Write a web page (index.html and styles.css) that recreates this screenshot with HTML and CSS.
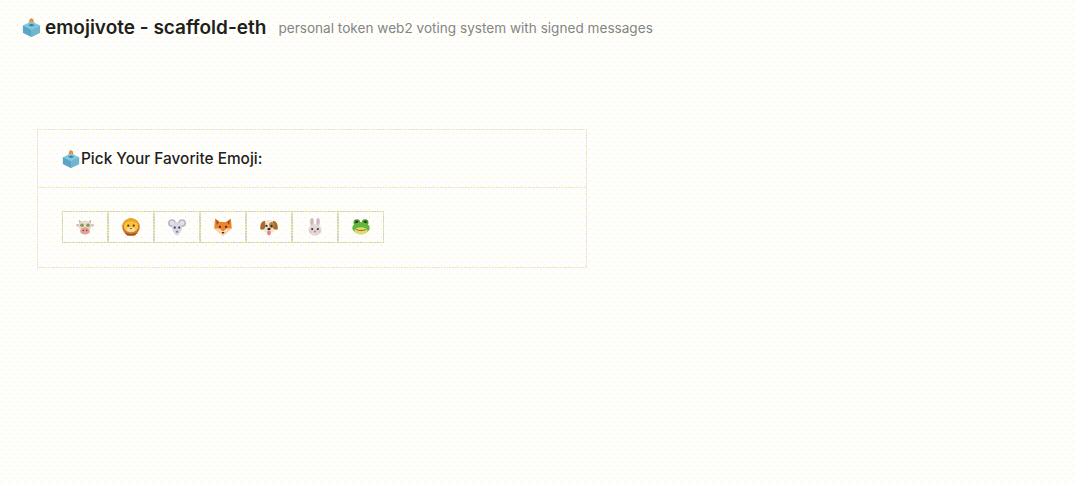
FILE: index.html
```html
<!DOCTYPE html>
<html lang="en">
<head>
    <meta charset="UTF-8">
    <meta name="viewport" content="width=device-width, initial-scale=1.0">
    <title>emojivote - scaffold-eth</title>
    <link rel="stylesheet" href="styles.css">
</head>
<body>

    <!-- Shared emoji drawings -->
    <svg class="defs" width="0" height="0">
        <symbol id="ballot" viewBox="0 0 20 20">
            <path d="M8 1.500L10 0l2 1.500L13 6l-2 2H9L7 6z" fill="#f08a3c"/>
            <path d="M10 3.500l9 4.500v7.500L10 20l-9-4.500V8z" fill="#82c8dc"/>
            <path d="M1 8l9 4.500V20l-9-4.500z" fill="#5aa5c6"/>
            <path d="M10 12.500L19 8v7.500L10 20z" fill="#70b6ce"/>
            <path d="M6.500 7.500L10 6l3.500 1.500L10 9z" fill="#3f7f9c"/>
        </symbol>
    </svg>

    <header class="page-header">
        <svg class="ballot-icon"><use href="#ballot"/></svg>
        <h1>emojivote - scaffold-eth</h1>
        <span class="subtitle">personal token web2 voting system with signed messages</span>
    </header>

    <div class="card">
        <div class="card-head">
            <svg class="ballot-icon small"><use href="#ballot"/></svg>
            <span>Pick Your Favorite Emoji:</span>
        </div>
        <div class="card-body">
            <!-- cow -->
            <button aria-label="cow">
                <svg class="emoji" viewBox="0 0 16 16">
                    <path d="M2.500 1.500l3 2.500-2 2zM13.500 1.500l-3 2.500 2 2z" fill="#b5a284"/>
                    <ellipse cx="1.800" cy="6.500" rx="1.800" ry="1.200" fill="#dcb8a4"/>
                    <ellipse cx="14.200" cy="6.500" rx="1.800" ry="1.200" fill="#dcb8a4"/>
                    <ellipse cx="8" cy="7" rx="5.800" ry="4.800" fill="#e8dccd"/>
                    <circle cx="5.300" cy="6.500" r="1.600" fill="#8b9656"/>
                    <circle cx="10.700" cy="6.500" r="1.600" fill="#8b9656"/>
                    <ellipse cx="8" cy="11.500" rx="4.300" ry="3.200" fill="#e2a09c"/>
                    <circle cx="6.500" cy="11" r=".7" fill="#7d4e4e"/>
                    <circle cx="9.500" cy="11" r=".7" fill="#7d4e4e"/>
                </svg>
            </button>
            <!-- lion -->
            <button aria-label="lion">
                <svg class="emoji" viewBox="0 0 16 16">
                    <circle cx="8" cy="8" r="7.800" fill="#cf7426"/>
                    <path d="M.8 6.500C1.500 2 5 .2 8 .2s6.500 1.800 7.200 6.300z" fill="#eca524"/>
                    <ellipse cx="8" cy="7.800" rx="6.400" ry="5" fill="#fbc43a"/>
                    <circle cx="5.600" cy="6.800" r="1" fill="#5b3a1a"/>
                    <circle cx="10.400" cy="6.800" r="1" fill="#5b3a1a"/>
                    <ellipse cx="8" cy="10.300" rx="3.800" ry="2" fill="#f5dfb0"/>
                    <path d="M6.800 8.800h2.400L8 10.200z" fill="#8a4a2a"/>
                    <path d="M2.500 13q5.500 2.500 11 0l-2 2.600h-7z" fill="#97501f"/>
                </svg>
            </button>
            <!-- mouse -->
            <button aria-label="mouse">
                <svg class="emoji" viewBox="0 0 16 16">
                    <circle cx="3.500" cy="4.500" r="3.500" fill="#b9b7c6"/>
                    <circle cx="12.500" cy="4.500" r="3.500" fill="#b9b7c6"/>
                    <circle cx="3.500" cy="4.500" r="2" fill="#ebdfe4"/>
                    <circle cx="12.500" cy="4.500" r="2" fill="#ebdfe4"/>
                    <path d="M8 3.500c3 0 4.500 2.500 4.500 5S10 15.500 8 15.500s-4.500-4.500-4.500-7S5 3.500 8 3.500z" fill="#d9d8e2"/>
                    <circle cx="6" cy="8.500" r="1" fill="#3d3b4a"/>
                    <circle cx="10" cy="8.500" r="1" fill="#3d3b4a"/>
                    <ellipse cx="8" cy="12.300" rx="1.100" ry=".9" fill="#7f7c8c"/>
                </svg>
            </button>
            <!-- fox -->
            <button aria-label="fox">
                <svg class="emoji" viewBox="0 0 16 16">
                    <path d="M1 .5l4.500 3h5L15 .5l.8 8.500L8 15.800.2 9z" fill="#ec8430"/>
                    <path d="M.8 9L8 15.800 15.200 9l-4.200.5L8 12 5 9.500z" fill="#fadcb4"/>
                    <path d="M2 1.500l2.200 2.300-1.700 2.500zM14 1.500l-2.200 2.300 1.700 2.500z" fill="#8a4a22"/>
                    <circle cx="5.300" cy="7.800" r="1" fill="#44260f"/>
                    <circle cx="10.700" cy="7.800" r="1" fill="#44260f"/>
                    <path d="M6.600 12.400h2.800L8 14.200z" fill="#44260f"/>
                </svg>
            </button>
            <!-- dog -->
            <button aria-label="dog">
                <svg class="emoji" viewBox="0 0 16 16">
                    <circle cx="8" cy="7.500" r="6" fill="#efe6d8"/>
                    <path d="M4.500 2.500C1.500 2.500-.2 6 .3 10c2.200 1 4 0 4.500-2.500z" fill="#a9682e"/>
                    <path d="M11.500 2.500c3 0 4.700 3.500 4.200 7.500-2.200 1-4 0-4.500-2.500z" fill="#a9682e"/>
                    <ellipse cx="10.500" cy="6.300" rx="2.400" ry="2.700" fill="#c08540"/>
                    <circle cx="5.800" cy="7" r="1" fill="#3a2a1e"/>
                    <circle cx="10.300" cy="7" r="1" fill="#3a2a1e"/>
                    <ellipse cx="8" cy="9.700" rx="1.500" ry="1.100" fill="#3a2a1e"/>
                    <ellipse cx="8" cy="13.300" rx="1.700" ry="2.200" fill="#ec7f8a"/>
                </svg>
            </button>
            <!-- rabbit -->
            <button aria-label="rabbit">
                <svg class="emoji" viewBox="0 0 16 16">
                    <ellipse cx="5.300" cy="3.500" rx="1.600" ry="3.500" fill="#c8bfc0"/>
                    <ellipse cx="10.700" cy="3.500" rx="1.600" ry="3.500" fill="#c8bfc0"/>
                    <ellipse cx="5.300" cy="3.800" rx=".7" ry="2.500" fill="#e5aeb6"/>
                    <ellipse cx="10.700" cy="3.800" rx=".7" ry="2.500" fill="#e5aeb6"/>
                    <ellipse cx="8" cy="10.500" rx="5.800" ry="5.200" fill="#e2d9d4"/>
                    <circle cx="5.500" cy="9.800" r="1" fill="#423840"/>
                    <circle cx="10.500" cy="9.800" r="1" fill="#423840"/>
                    <ellipse cx="8" cy="12" rx="1.100" ry=".8" fill="#d0808f"/>
                    <circle cx="3.800" cy="12" r="1.100" fill="#ecc0c4"/>
                    <circle cx="12.200" cy="12" r="1.100" fill="#ecc0c4"/>
                </svg>
            </button>
            <!-- frog -->
            <button aria-label="frog">
                <svg class="emoji" viewBox="0 0 16 16">
                    <circle cx="4.300" cy="4" r="2.900" fill="#4f9a32"/>
                    <circle cx="11.700" cy="4" r="2.900" fill="#4f9a32"/>
                    <circle cx="4.300" cy="3.800" r="1.300" fill="#26331c"/>
                    <circle cx="11.700" cy="3.800" r="1.300" fill="#26331c"/>
                    <ellipse cx="8" cy="8.800" rx="7.800" ry="5.200" fill="#63b53c"/>
                    <ellipse cx="8" cy="11.500" rx="5.800" ry="3.300" fill="#d5e272"/>
                    <path d="M3 9.500q5 2.500 10 0-1 2-5 2t-5-2z" fill="#c2453c"/>
                </svg>
            </button>
        </div>
    </div>

</body>
</html>
```

FILE: styles.css
```css
body {
    font-family: Inter, "Liberation Sans", sans-serif;
    background-color: #fefeff;
    background-image:
        radial-gradient(circle at 1.5px 1.5px, #fff27c .9px, transparent .9px),
        radial-gradient(circle at 5.5px 5.5px, #fff27c .9px, transparent .9px);
    background-size: 8px 8px;
    color: #1f1f1c;
    margin: 0;
}
.defs {
    display: block;
    height: 0;
}
.page-header {
    display: flex;
    align-items: center;
    padding: 17px 22px 0;
    height: 21px;
}
.page-header h1 {
    font-size: 19px;
    font-weight: 600;
    line-height: 21px;
    margin: 0 12px 0 4px;
}
.subtitle {
    font-size: 13.6px;
    color: #85857f;
}
.ballot-icon {
    width: 19px;
    height: 19px;
    flex: none;
}
.ballot-icon.small {
    width: 18px;
    height: 18px;
}
.card {
    width: 548px;
    margin: 91px 0 0 37px;
    border: 1px solid;
    border-image: repeating-linear-gradient(45deg, #e0e0f2 0 1px, #fff6b4 1px 2px) 1;
}
.card-head {
    display: flex;
    align-items: center;
    height: 57px;
    padding: 0 24px;
    font-size: 15.4px;
    font-weight: 500;
    line-height: 20px;
    border-bottom: 1px solid;
    border-image: repeating-linear-gradient(45deg, #e0e0f2 0 1px, #fff6b4 1px 2px) 1;
}
.card-head span {
    margin-left: 1px;
}
.card-body {
    display: flex;
    padding: 23px 24px 24px;
}
button {
    display: flex;
    justify-content: center;
    align-items: center;
    width: 46px;
    height: 32px;
    padding: 0;
    background: transparent;
    border: 1px solid;
    border-image: repeating-linear-gradient(45deg, #cdcdda 0 1px, #eeee9a 1px 2px) 1;
    cursor: pointer;
}
.emoji {
    width: 18px;
    height: 18px;
}
```
